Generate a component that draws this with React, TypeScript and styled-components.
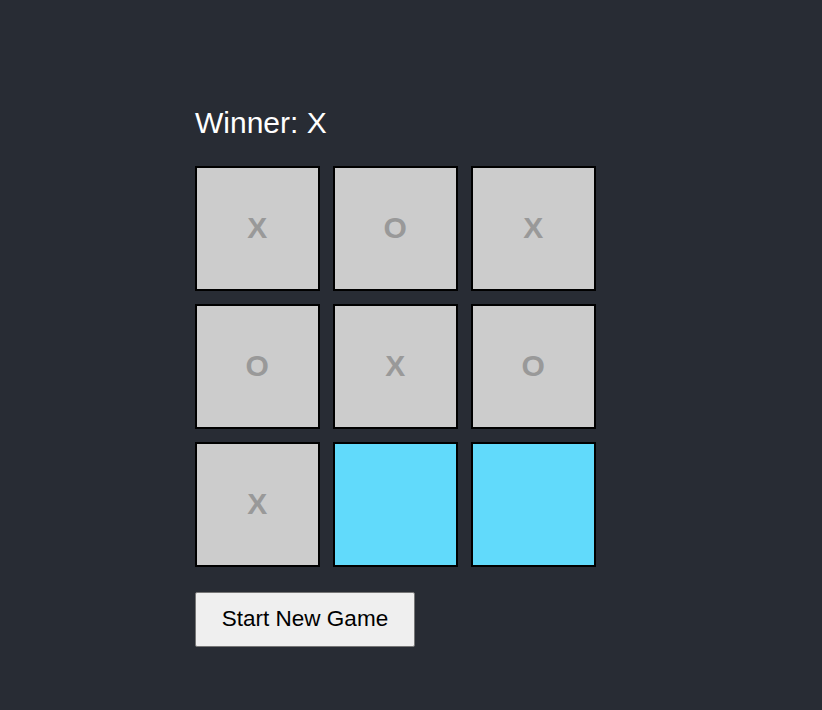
import { createGlobalStyle } from "styled-components";
import styled from "styled-components";

const GlobalStyle = createGlobalStyle`
	html, body {
		margin: 0;
		background: #282c34;
	}

	body {
		font-family: "Liberation Sans", Arial, sans-serif;
		min-height: 100vh;
	}
`;

const Page = styled.main`
	box-sizing: border-box;
	display: flex;
	flex-direction: column;
	align-items: flex-start;
	min-height: 710px;
	padding: 106px 0 0 195px;
`;

const Status = styled.div`
	color: white;
	font-size: 30px;
	line-height: 34px;
	margin-bottom: 26px;
`;

const Board = styled.div`
	display: grid;
	grid-template-columns: repeat(3, 124.5px);
	grid-auto-rows: 124.5px;
	gap: 13.5px;
`;

const Cell = styled.button<{ $highlight: boolean }>`
	box-sizing: border-box;
	display: flex;
	align-items: center;
	justify-content: center;
	padding: 0;
	border: 2px solid black;
	border-radius: 0;
	background: ${ ({ $highlight }) => $highlight ? "#61dafb" : "#cccccc" };
	color: #999999;
	font-family: inherit;
	font-size: 30px;
	font-weight: bold;
	cursor: pointer;
`;

const NewGameButton = styled.button`
	box-sizing: border-box;
	width: 220px;
	height: 55px;
	margin-top: 25px;
	border: 1px solid #767676;
	border-radius: 2px;
	background: #efefef;
	color: black;
	font-family: inherit;
	font-size: 22.5px;
	cursor: pointer;
`;

const squares = [ "X", "O", "X", "O", "X", "O", "X", null, null ];

export default function App() {
	return(
		<>
			<GlobalStyle />
			<Page>
				<Status>{ "Winner: X" }</Status>
				<Board>
					{ squares.map((value, i) => (
						<Cell key={ i } $highlight={ value === null }>
							{ value }
						</Cell>
					)) }
				</Board>
				<NewGameButton>{ "Start New Game" }</NewGameButton>
			</Page>
		</>
	);
}
